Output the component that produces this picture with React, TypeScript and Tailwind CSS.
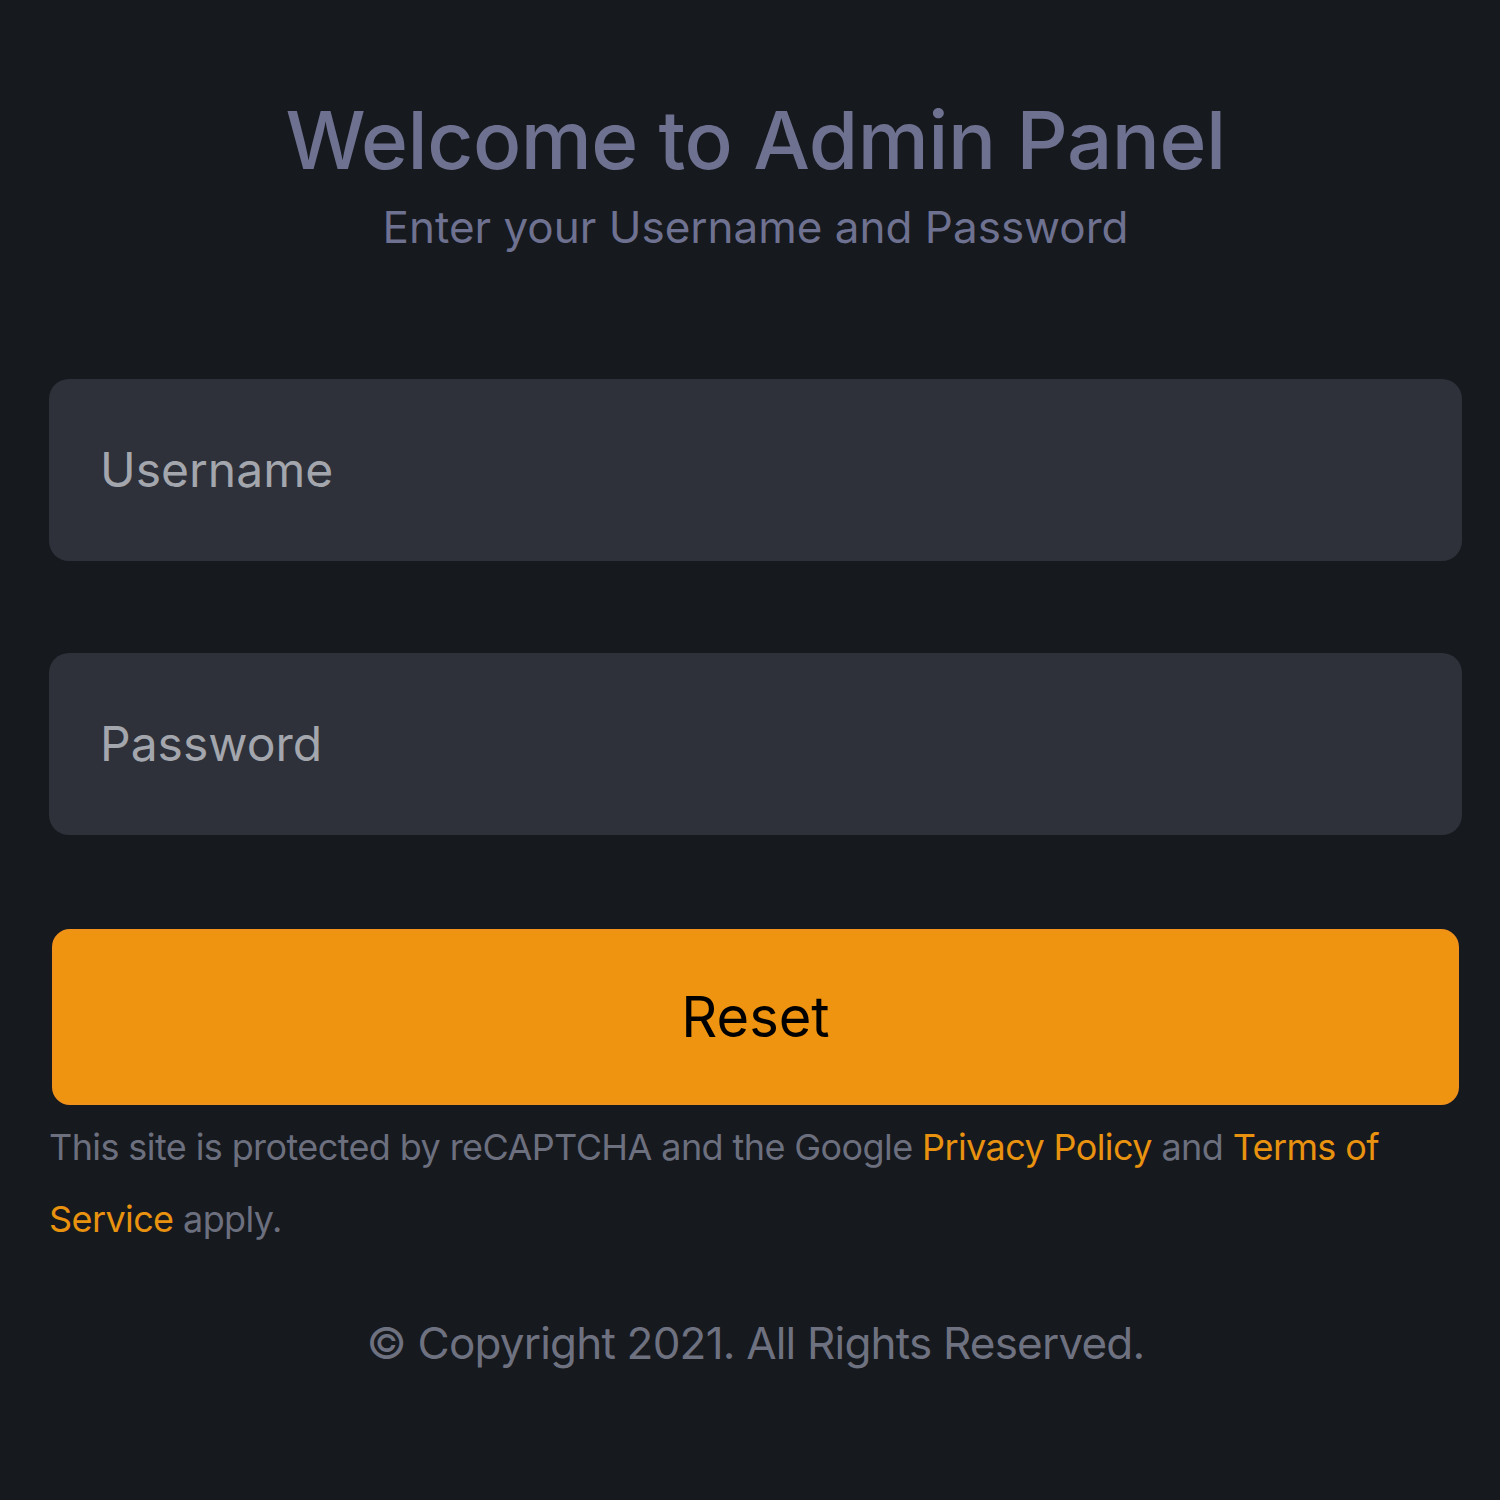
import React from "react";

export default function App() {
  return (
    <div
      className="w-[1500px] h-[1500px] bg-[#16191e] pl-[49px] pr-[38px] pt-[92px]"
      style={{ fontFamily: "Inter, 'Noto Sans', sans-serif" }}
    >
      <h1 className="text-center text-[80px] leading-[96px] font-medium text-[#6e7190] tracking-[-0.5px]">
        Welcome to Admin Panel
      </h1>
      <p className="text-center text-[44px] leading-[60px] text-[#6e7190] mt-[9px]">
        Enter your Username and Password
      </p>
      <div className="mt-[122px] flex flex-col gap-[92px]">
        <div className="h-[182px] rounded-[20px] bg-[#2e3139] flex items-center px-[51px]">
          <span className="text-[48px] text-[#a3a6ad]">Username</span>
        </div>
        <div className="h-[182px] rounded-[20px] bg-[#2e3139] flex items-center px-[51px]">
          <span className="text-[48px] text-[#a3a6ad]">Password</span>
        </div>
      </div>
      <div className="mt-[94px] mx-[3px] h-[176px] rounded-[18px] bg-[#ef9410] border-2 border-[#f0921a] flex items-center justify-center">
        <span className="text-[56px] text-black">Reset</span>
      </div>
      <p className="mt-[6px] text-[36px] leading-[72px] text-[#6c6f7e] tracking-[-0.6px]">
        This site is protected by reCAPTCHA and the Google{" "}
        <span className="text-[#e8920f]">Privacy Policy</span> and{" "}
        <span className="text-[#e8920f]">Terms of Service</span> apply.
      </p>
      <p className="mt-[58px] text-center text-[44px] leading-[60px] text-[#6e7180] tracking-[-0.8px]">
        © Copyright 2021. All Rights Reserved.
      </p>
    </div>
  );
}
